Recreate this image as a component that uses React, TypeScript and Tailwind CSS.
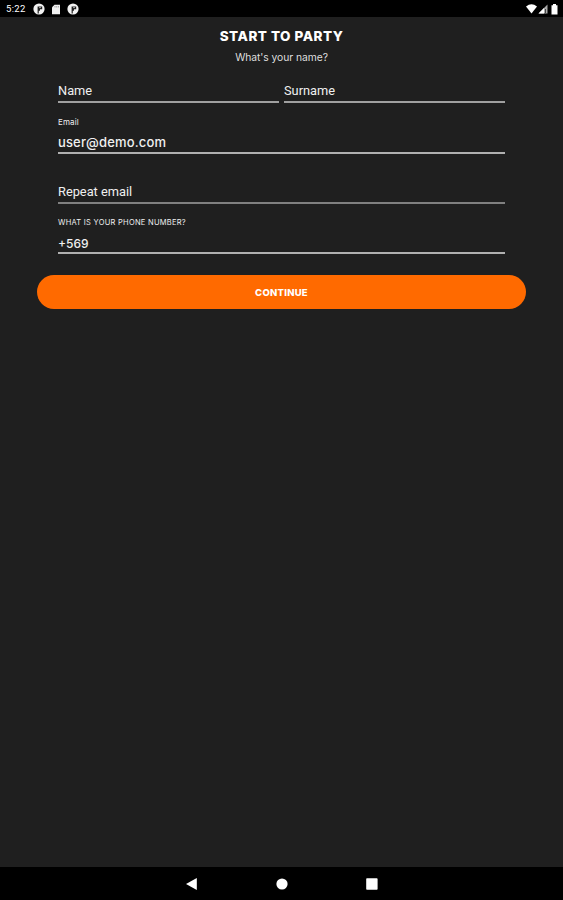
import React from 'react';

interface FieldProps {
  label?: string;
  labelClass?: string;
  valueClass?: string;
  className?: string;
  lineClass?: string;
  children: React.ReactNode;
}

const Field: React.FC<FieldProps> = ({
  label,
  labelClass = '',
  valueClass = 'leading-5',
  className = '',
  lineClass = 'border-[#a0a0a0]',
  children,
}) => (
  <div className={`flex flex-col justify-end border-b-2 text-[#f0f0f0] whitespace-nowrap ${lineClass} ${className}`}>
    {label && <div className={`h-3 mb-1 ${labelClass}`}>{label}</div>}
    <div className={`h-5 ${valueClass}`}>{children}</div>
  </div>
);

const NotificationIcon = () => (
  <svg width="12" height="12" viewBox="0 0 12 12">
    <circle cx="6" cy="6" r="5.6" fill="#f2f2f2" />
    <path d="M4.6 3.4h4.6v2.8H7v1.6H5.8v2.6H4.6z" fill="#222" />
    <path d="M6 4.6h2" stroke="#ddd" strokeWidth=".7" />
  </svg>
);

const StatusBar = () => (
  <div className="h-[17px] shrink-0 bg-black flex items-center justify-between pl-1.5 pr-[5px] pt-px text-white">
    <div className="flex items-center">
      <span className="w-[27px] text-[9.5px] leading-none tracking-[0.3px] font-[Roboto,sans-serif]">5:22</span>
      <NotificationIcon />
      <svg className="ml-[6px] mr-[6px]" width="10" height="11" viewBox="0 0 10 11">
        <path d="M3.5.7H9v9.6H1V3.2z" fill="#f2f2f2" />
        <path d="M4 2v1.5M5.7 2v1.5M7.4 2v1.5" stroke="#888" strokeWidth=".7" />
      </svg>
      <NotificationIcon />
    </div>
    <div className="flex items-center">
      <svg width="11" height="10" viewBox="0 0 11 10">
        <path d="M0 2.5Q5.5-1.8 11 2.5L5.5 9.5z" fill="#fff" />
      </svg>
      <svg className="ml-px" width="10" height="10" viewBox="0 0 10 10">
        <path d="M9.5.5v9H.5z" fill="#aaa" />
        <path d="M6 4v5.5H.5z" fill="#fff" />
        <path d="M7.5 5v4" stroke="#444" strokeWidth="1" />
      </svg>
      <svg className="ml-[3px]" width="7" height="11" viewBox="0 0 7 11">
        <path d="M2 0h3v1.2h1.5V10.5H.5V1.2H2z" fill="#fff" />
      </svg>
    </div>
  </div>
);

const NavBar = () => (
  <div className="h-[33px] shrink-0 bg-black flex items-center justify-center gap-[78px]">
    <svg width="12" height="12" viewBox="0 0 12 12">
      <path d="M10.8 0v12L0 6z" fill="#fff" />
    </svg>
    <svg width="12" height="12" viewBox="0 0 12 12">
      <circle cx="6" cy="6" r="5.6" fill="#fff" />
    </svg>
    <svg width="12" height="12" viewBox="0 0 12 12">
      <rect x=".2" y=".2" width="11.4" height="11.6" rx=".8" fill="#fff" />
    </svg>
  </div>
);

export default function App() {
  return (
    <div className="w-full h-screen flex flex-col overflow-hidden bg-[#1f1f1f] font-[Inter,sans-serif] text-white">
      <StatusBar />

      <div className="flex-1 px-[37px] pt-[9px]">
        <h1 className="h-5 leading-5 text-center text-[13.5px] font-extrabold tracking-[0.5px]">START TO PARTY</h1>
        <p className="h-4 mt-[3px] leading-4 text-center text-[10.3px] tracking-[-0.05px] text-[#dedede]">What's your name?</p>

        <div className="px-[21px] mt-[16px]">
          <div className="flex gap-[5px] font-[Roboto,sans-serif] text-[12.8px]">
            <Field className="flex-1">Name</Field>
            <Field className="flex-1">Surname</Field>
          </div>
          <Field
            className="mt-[13px] text-[13px] font-medium tracking-[0.15px]"
            lineClass="border-[#b0b0b0]"
            label="Email"
            labelClass="text-[8px] leading-3 font-normal"
          >
            user@demo.com
          </Field>
          <Field className="mt-[28px] font-[Roboto,sans-serif] text-[12.8px]" lineClass="border-[#808080]">Repeat email</Field>
          <Field
            className="mt-[12px] text-[12px] font-medium"
            valueClass="leading-[23px]"
            lineClass="border-[#b0b0b0]"
            label="WHAT IS YOUR PHONE NUMBER?"
            labelClass="text-[7.5px] leading-[14px] font-normal tracking-[0.27px]"
          >
            +569
          </Field>
        </div>

        <button className="block w-full h-[34px] mt-[21px] rounded-full bg-[#ff6a00] text-[9.5px] font-extrabold leading-[36px] tracking-[0.25px]">
          CONTINUE
        </button>
      </div>

      <NavBar />
    </div>
  );
}
